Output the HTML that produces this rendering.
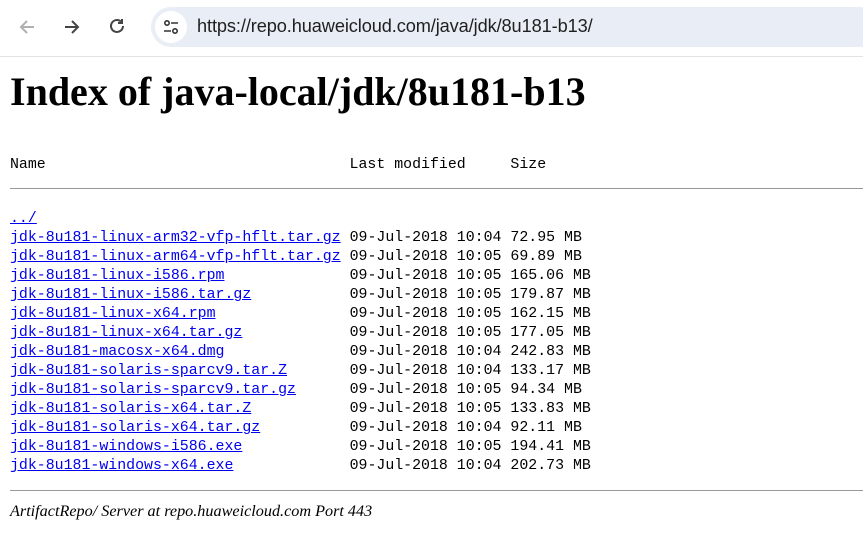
<!DOCTYPE html>
<html><head><meta charset="utf-8"><style>
html,body{margin:0;padding:0;width:863px;height:534px;overflow:hidden;background:#fff}
.bar{position:absolute;left:0;top:0;width:863px;height:56px;background:#fff;border-bottom:1px solid #e3e3e3}
.pill{position:absolute;left:151px;top:7px;width:730px;height:40px;border-radius:20px;background:#e9eef6}
.url{position:absolute;left:197px;top:16px;font:18.2px "Liberation Sans",sans-serif;color:#1f1f1f;letter-spacing:-0.1px}
.ic{position:absolute}
h1{position:absolute;left:10px;top:68px;margin:0;font:bold 40px "Liberation Serif",serif;color:#000;white-space:nowrap}
pre{position:absolute;left:10px;margin:0;font:14.9px/19px "Liberation Mono",monospace;color:#000;white-space:pre}
a{color:#0000ee;text-decoration:underline}
hr{position:absolute;left:10px;width:853px;margin:0;border:0;border-top:1px solid #999;height:0}
.foot{position:absolute;left:10px;top:502px;font:italic 16.2px "Liberation Serif",serif}
</style></head><body>
<div class="bar">
<svg class="ic" style="left:17px;top:17px" width="20" height="20" viewBox="0 0 20 20"><path d="M17 10H4M10 4L4 10l6 6" stroke="#b0b0b0" stroke-width="2" fill="none"/></svg>
<svg class="ic" style="left:62px;top:17px" width="20" height="20" viewBox="0 0 20 20"><path d="M3 10h13M10 4l6 6-6 6" stroke="#444" stroke-width="2" fill="none"/></svg>
<svg class="ic" style="left:107px;top:16px" width="20" height="20" viewBox="0 0 20 20"><path d="M16 10a6 6 0 1 1-2-4.5" stroke="#444" stroke-width="2" fill="none"/><path d="M15 3v4h-4" stroke="#444" stroke-width="2" fill="none"/></svg>
<div class="pill"></div>
<div class="ic" style="left:155px;top:11px;width:32px;height:32px;border-radius:16px;background:#fff"></div>
<svg class="ic" style="left:162px;top:18px" width="18" height="18" viewBox="0 0 18 18"><circle cx="5" cy="5" r="2.2" stroke="#333" stroke-width="1.6" fill="none"/><path d="M9 5h7M2 13h7" stroke="#333" stroke-width="1.6"/><circle cx="13" cy="13" r="2.2" stroke="#333" stroke-width="1.6" fill="none"/></svg>
<div class="url">https://repo.huaweicloud.com/java/jdk/8u181-b13/</div>
</div>
<h1>Index of java-local/jdk/8u181-b13</h1>
<pre style="top:156px">Name                                  Last modified     Size</pre>
<hr style="top:188px">
<pre style="top:210px"><a>../</a>
<a>jdk-8u181-linux-arm32-vfp-hflt.tar.gz</a> 09-Jul-2018 10:04 72.95 MB
<a>jdk-8u181-linux-arm64-vfp-hflt.tar.gz</a> 09-Jul-2018 10:05 69.89 MB
<a>jdk-8u181-linux-i586.rpm</a>              09-Jul-2018 10:05 165.06 MB
<a>jdk-8u181-linux-i586.tar.gz</a>           09-Jul-2018 10:05 179.87 MB
<a>jdk-8u181-linux-x64.rpm</a>               09-Jul-2018 10:05 162.15 MB
<a>jdk-8u181-linux-x64.tar.gz</a>            09-Jul-2018 10:05 177.05 MB
<a>jdk-8u181-macosx-x64.dmg</a>              09-Jul-2018 10:04 242.83 MB
<a>jdk-8u181-solaris-sparcv9.tar.Z</a>       09-Jul-2018 10:04 133.17 MB
<a>jdk-8u181-solaris-sparcv9.tar.gz</a>      09-Jul-2018 10:05 94.34 MB
<a>jdk-8u181-solaris-x64.tar.Z</a>           09-Jul-2018 10:05 133.83 MB
<a>jdk-8u181-solaris-x64.tar.gz</a>          09-Jul-2018 10:04 92.11 MB
<a>jdk-8u181-windows-i586.exe</a>            09-Jul-2018 10:05 194.41 MB
<a>jdk-8u181-windows-x64.exe</a>             09-Jul-2018 10:04 202.73 MB</pre>
<hr style="top:490px">
<div class="foot">ArtifactRepo/ Server at repo.huaweicloud.com Port 443</div>
</body></html>
